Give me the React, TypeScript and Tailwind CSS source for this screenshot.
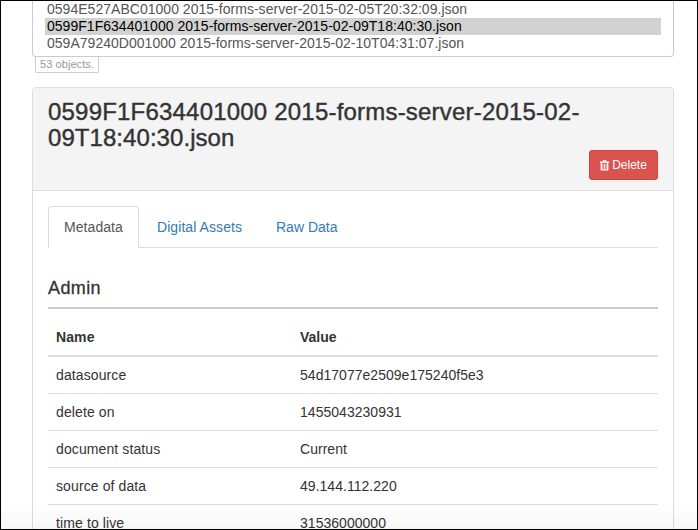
import React from "react";

const rows = [
  { name: "datasource", value: "54d17077e2509e175240f5e3" },
  { name: "delete on", value: "1455043230931" },
  { name: "document status", value: "Current" },
  { name: "source of data", value: "49.144.112.220" },
  { name: "time to live", value: "31536000000" },
];

function TrashIcon() {
  return (
    <svg width="9" height="11" viewBox="0 0 9 11" className="mr-[3px] shrink-0" fill="none" stroke="currentColor">
      <path d="M3 1.5V.6h3v.9" strokeWidth="1" />
      <path d="M0 2.2h9" strokeWidth="1.5" />
      <path d="M1.3 3v6.9h6.4V3" strokeWidth="1.3" strokeLinejoin="round" />
      <path d="M2.9 3.8v5.6M4.5 3.8v5.6M6.1 3.8v5.6" strokeWidth="0.8" />
    </svg>
  );
}

function ObjectList() {
  return (
    <div className="h-[56px] rounded-b-[4px] border border-t-0 border-[#ccc] pl-[12px] pr-[12px] text-[14px] leading-[17px] tracking-[0.025px] text-[#555]">
      <div className="pl-[2px]">0594E527ABC01000 2015-forms-server-2015-02-05T20:32:09.json</div>
      <div className="bg-[#d2d2d2] pl-[2px] text-black">0599F1F634401000 2015-forms-server-2015-02-09T18:40:30.json</div>
      <div className="pl-[2px]">059A79240D001000 2015-forms-server-2015-02-10T04:31:07.json</div>
    </div>
  );
}

export default function App() {
  return (
    <div className="relative h-[530px] w-[698px] overflow-hidden border border-black bg-white pl-[31px] pr-[23px] font-['Helvetica_Neue','Liberation_Sans',Arial,sans-serif] text-[14px] leading-[20px] text-[#333]">
      <ObjectList />
      <div className="ml-[3px] flex h-[16px] w-[64px] items-center rounded-b-[2px] border border-t-0 border-[#ccc] pl-[4px] text-[11px] leading-[15px] tracking-[0.07px] text-[#999]">
        53 objects.
      </div>

      <div className="mt-[14px] h-[520px] rounded-t-[4px] border border-[#ddd]">
        <div className="flex h-[103px] flex-col rounded-t-[3px] border-b border-[#ddd] bg-[#f4f4f4] px-[15px] pt-[11px]">
          <h3 className="text-[24px] leading-[26px] [-webkit-text-stroke:0.4px_#333]">
            <span className="block tracking-[0.2px]">0599F1F634401000 2015-forms-server-2015-02-</span>
            <span className="block tracking-[0.06px]">09T18:40:30.json</span>
          </h3>
          <button className="-mt-px flex h-[30px] w-[69px] items-center justify-center self-end rounded-[3px] border border-[#d43f3a] bg-[#d9534f] text-[12px] leading-[18px] text-white">
            <TrashIcon />
            Delete
          </button>
        </div>

        <div className="px-[15px] pt-[15px]">
          <nav className="flex h-[42px] border-b border-[#ddd] tracking-[0.07px]">
            <a className="mr-[2px] h-[42px] w-[91px] rounded-t-[4px] border border-b-0 border-[#ddd] bg-white pl-[15px] pt-[10px] text-[#555]">Metadata</a>
            <a className="mr-[2px] w-[117px] pl-[16px] pt-[11px] text-[#337ab7]">Digital Assets</a>
            <a className="pl-[16px] pt-[11px] tracking-normal text-[#337ab7]">Raw Data</a>
          </nav>
          <h4 className="mt-[30px] h-[31px] border-b-2 border-[#ccc] text-[18px] leading-[20px] tracking-[0.4px] [-webkit-text-stroke:0.3px_#333]">Admin</h4>
          <table className="mt-[9px] w-full table-fixed border-collapse text-left">
            <thead>
              <tr className="h-[38px] border-b-2 border-[#ddd]">
                <th className="w-[40%] px-2 font-bold tracking-[0.1px]">Name</th>
                <th className="px-2 font-bold">Value</th>
              </tr>
            </thead>
            <tbody>
              {rows.map((row) => (
                <tr key={row.name} className="h-[37px] border-b border-[#ddd]">
                  <td className="px-2 tracking-[0.11px]">{row.name}</td>
                  <td className="px-2 tracking-[0.03px]">{row.value}</td>
                </tr>
              ))}
            </tbody>
          </table>
        </div>
      </div>
      <div className="pointer-events-none absolute inset-x-0 bottom-0 h-[28px] bg-gradient-to-b from-transparent to-black/[0.035]" />
    </div>
  );
}
